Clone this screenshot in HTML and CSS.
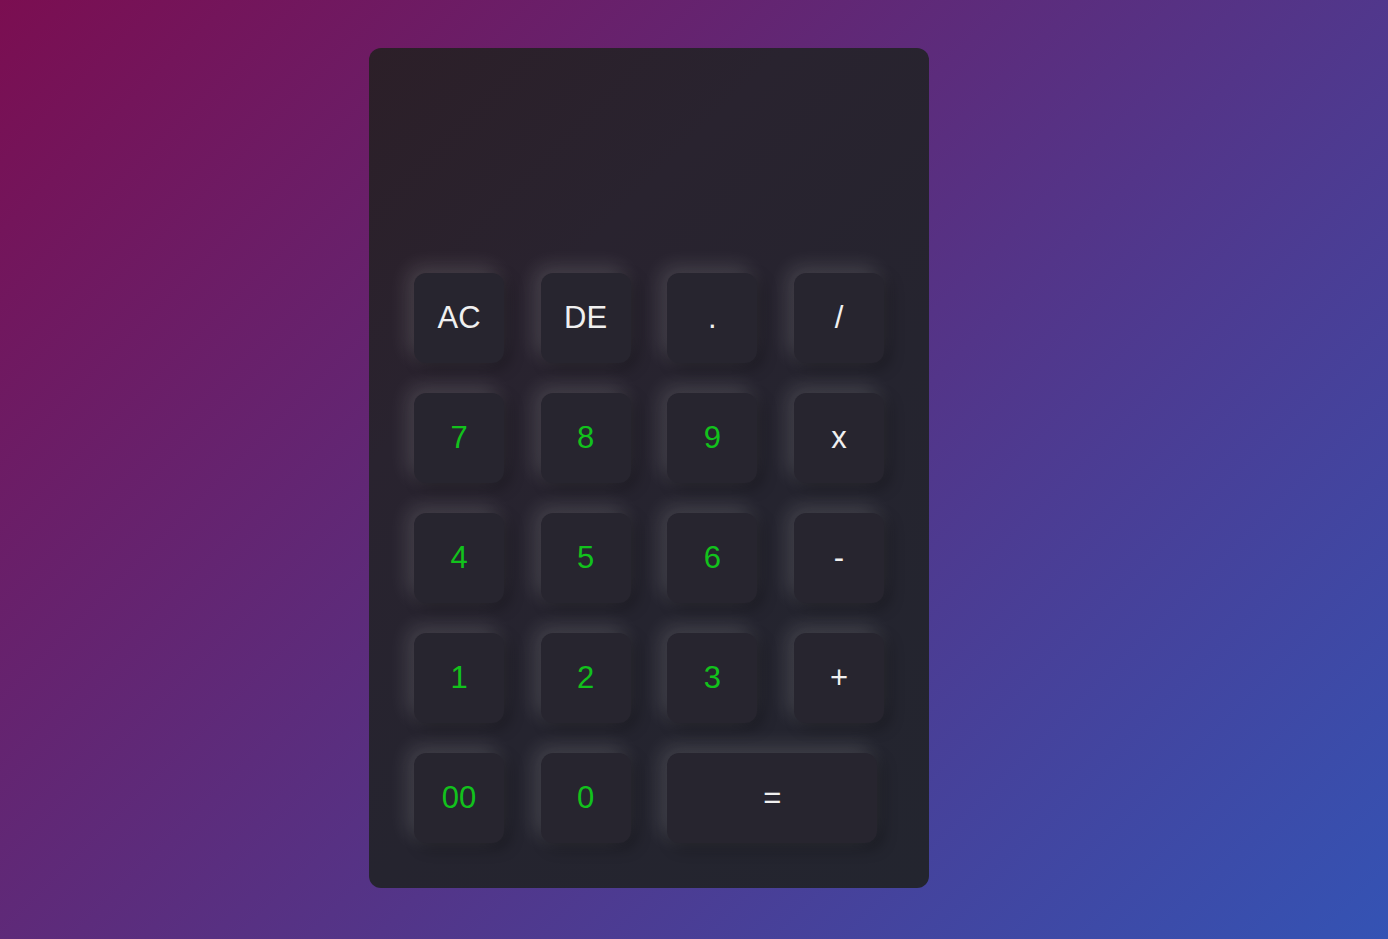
FILE: index.html
```html
<!DOCTYPE html>
<html>
<head>
<meta charset="utf-8">
<link rel="stylesheet" href="styles.css">
</head>
<body>
<div class="page">
  <div class="calc">
    <div class="display"></div>
    <div class="keys">
      <button class="key op">AC</button>
      <button class="key op">DE</button>
      <button class="key op">.</button>
      <button class="key op">/</button>
      <button class="key num">7</button>
      <button class="key num">8</button>
      <button class="key num">9</button>
      <button class="key op">x</button>
      <button class="key num">4</button>
      <button class="key num">5</button>
      <button class="key num">6</button>
      <button class="key op">-</button>
      <button class="key num">1</button>
      <button class="key num">2</button>
      <button class="key num">3</button>
      <button class="key op">+</button>
      <button class="key num">00</button>
      <button class="key num">0</button>
      <button class="key op equal">=</button>
    </div>
  </div>
</div>
</body>
</html>
```
FILE: styles.css
```css
* { box-sizing: border-box; }
html, body { margin: 0; padding: 0; }
body {
  min-height: 939px;
  background: linear-gradient(135deg, #7b0e51 0%, #3453b4 100%);
  font-family: "Liberation Sans", Arial, sans-serif;
}
.page {
  width: 1388px;
  height: 939px;
  padding-top: 48px;
  padding-left: 369px;
}
.calc {
  width: 560px;
  height: 840px;
  border-radius: 12px;
  background: linear-gradient(135deg, #2c1f28 0%, #29232f 30%, #25242f 60%, #23252f 100%);
  padding: 0 45px 45px 45px;
  display: flex;
  flex-direction: column;
}
.display {
  height: 225px;
  flex: none;
}
.keys {
  display: grid;
  grid-template-columns: repeat(4, 90px);
  grid-auto-rows: 90px;
  column-gap: 36.67px;
  row-gap: 30px;
}
.key {
  border: none;
  outline: none;
  border-radius: 12px;
  background: #27252f;
  font-family: "Liberation Sans", Arial, sans-serif;
  font-size: 31px;
  padding: 0 0 1px 0;
  margin: 0;
  box-shadow: -6px -6px 20px rgba(255, 255, 255, 0.15), 5px 5px 15px rgba(0, 0, 0, 0.3);
  display: flex;
  align-items: center;
  justify-content: center;
}
.op { color: #f0f0f0; }
.num { color: #12c21c; }
.equal {
  grid-column: span 2;
  width: 210px;
}
```
